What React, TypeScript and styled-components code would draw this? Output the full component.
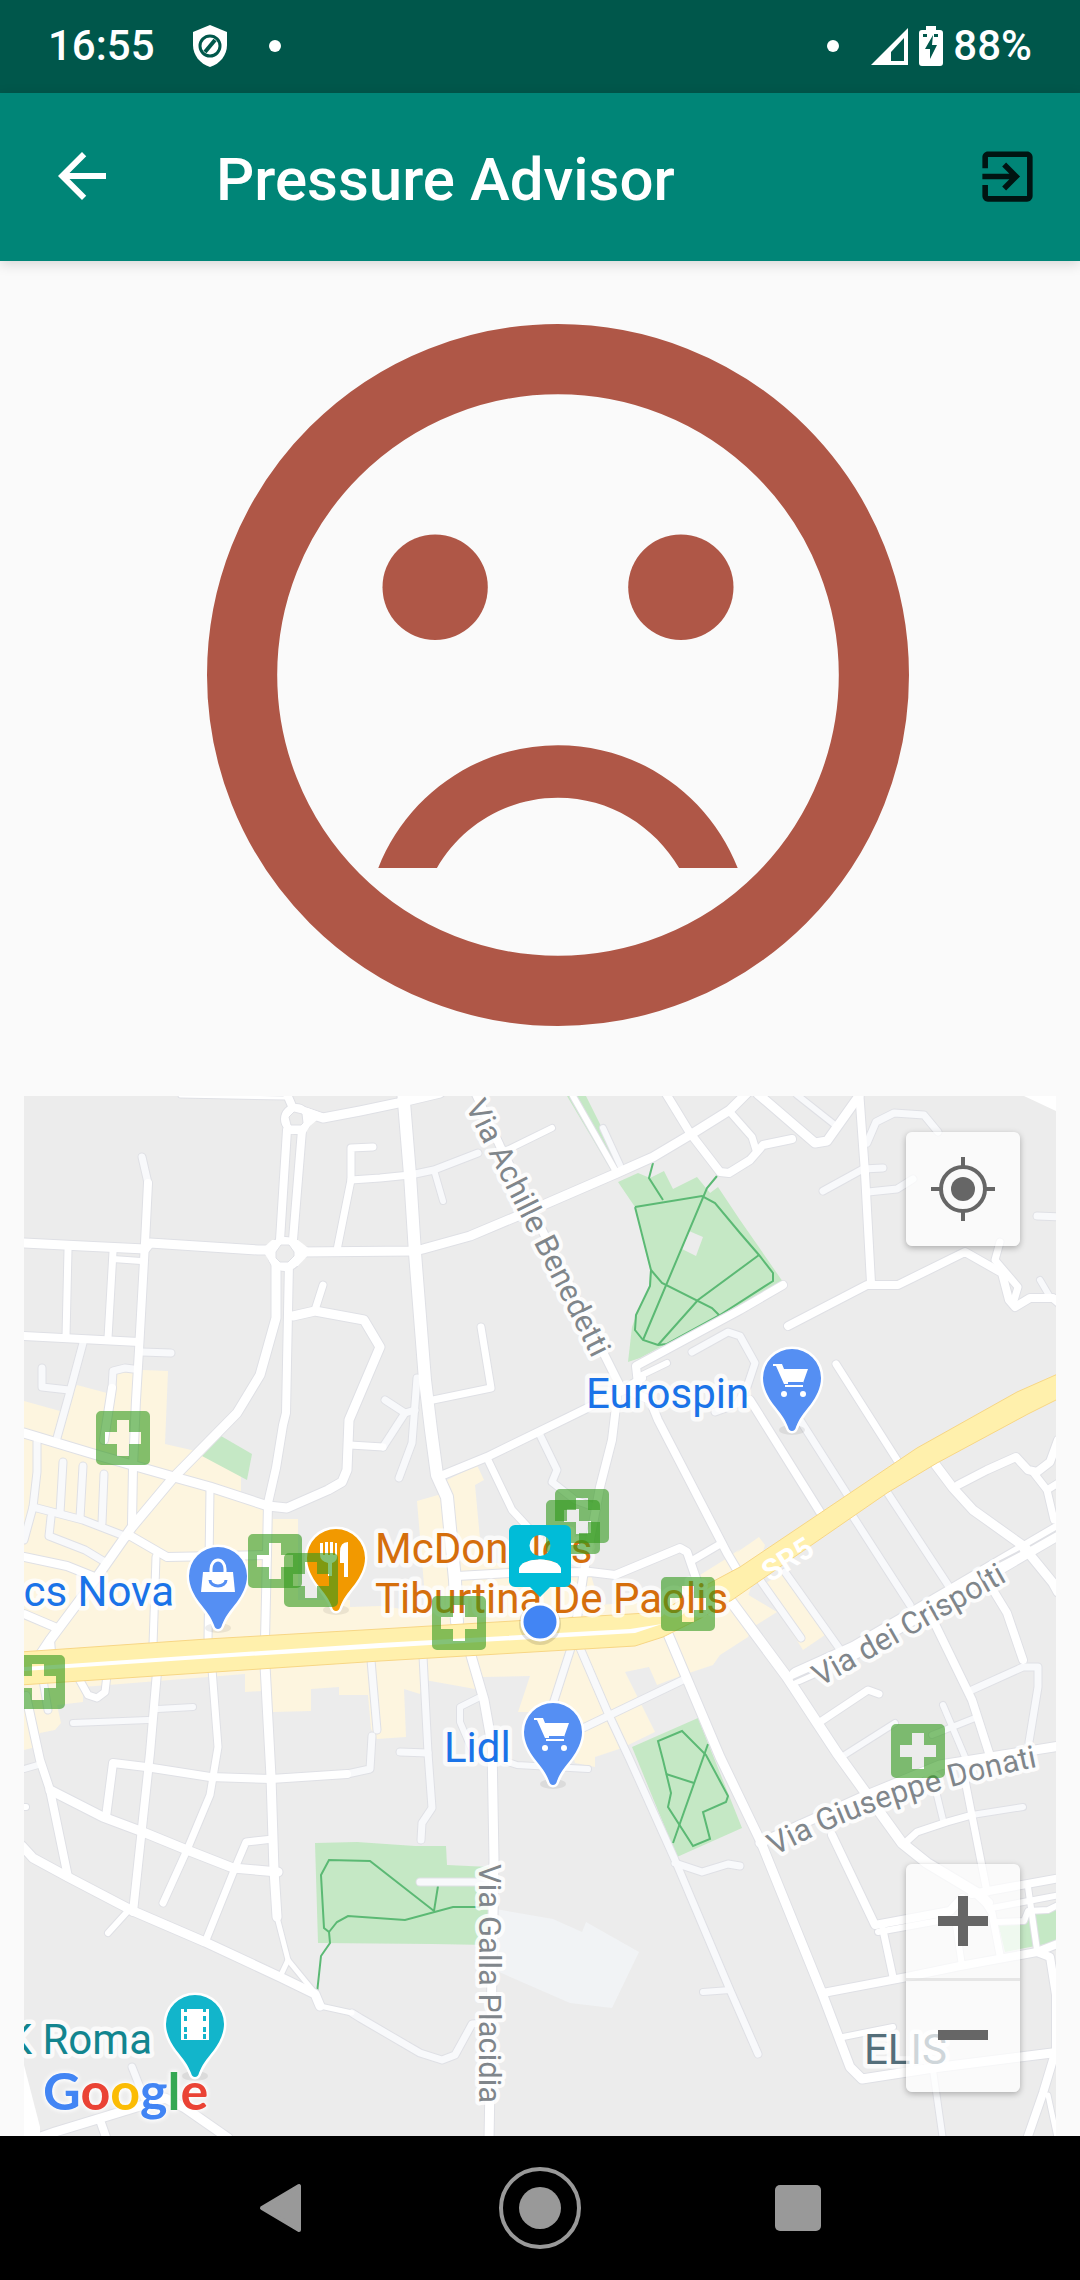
import React from 'react';
import styled, { createGlobalStyle } from 'styled-components';

const GlobalStyle = createGlobalStyle`
  * { box-sizing: border-box; }
  body { margin: 0; background: #fafafa; font-family: Roboto, "Noto Sans", sans-serif; }
`;

const Page = styled.div`
  display: flex;
  flex-direction: column;
  min-height: 100vh;
  background: #fafafa;
`;

const StatusBar = styled.div`
  display: flex;
  align-items: center;
  justify-content: space-between;
  height: 93px;
  padding: 0 48px 2px;
  background: #00574b;
  color: #fff;
  font-size: 42px;
  font-weight: 500;
  line-height: 48px;
`;

const StatusGroup = styled.div<{ $gap: number }>`
  display: flex;
  align-items: center;
  gap: ${(p) => p.$gap}px;
`;

const Dot = styled.span`
  width: 12px;
  height: 12px;
  margin: 0 4px;
  border-radius: 50%;
  background: #fff;
`;

const AppBar = styled.header`
  display: flex;
  align-items: center;
  height: 168px;
  padding: 0 37px 2px 46px;
  background: #008577;
  box-shadow: 0 3px 12px rgba(0, 0, 0, 0.15);
  z-index: 1;
`;

const Title = styled.h1`
  flex: 1;
  margin: 0 0 0 98px;
  padding-top: 8px;
  color: #fff;
  font-size: 60px;
  font-weight: 500;
  line-height: 72px;
`;

const IconButton = styled.button`
  display: flex;
  align-items: center;
  justify-content: center;
  width: 72px;
  height: 72px;
  padding: 0;
  border: 0;
  background: transparent;
  cursor: pointer;
`;

const Main = styled.main`
  display: flex;
  flex-direction: column;
  flex: 1;
`;

const Mood = styled.section`
  display: flex;
  justify-content: center;
  padding: 63px 0 70px 36px;

  svg {
    display: block;
    width: 702px;
    max-width: 100%;
  }
`;

const MapPanel = styled.section`
  position: relative;
  margin: 0 24px;
  overflow: hidden;
  background: #ececec;
`;

const MapDrawing = styled.svg`
  display: block;
  width: 100%;
  font-family: Roboto, "Noto Sans", sans-serif;
`;

const PlaceName = styled.text`
  font-size: 42px;
  stroke: rgba(255, 255, 255, 0.75);
  stroke-width: 9px;
  stroke-linejoin: round;
  paint-order: stroke;
`;

const StreetName = styled.text`
  font-size: 31px;
  fill: #80868b;
  stroke: rgba(255, 255, 255, 0.85);
  stroke-width: 8px;
  stroke-linejoin: round;
  paint-order: stroke;
`;

const RouteName = styled.text`
  font-size: 30px;
  font-weight: 700;
  fill: #fff;
`;

const Brand = styled.text`
  font-family: Lato, sans-serif;
  font-size: 52px;
  font-weight: 700;
  filter: drop-shadow(0 0 2px #fff) drop-shadow(0 0 2px #fff);
`;

const MapControls = styled.div<{ $edge: 'top' | 'bottom' }>`
  position: absolute;
  right: 36px;
  ${(p) => (p.$edge === 'top' ? 'top: 36px;' : 'bottom: 44px;')}
  display: flex;
  flex-direction: column;
  border-radius: 6px;
  background: rgba(255, 255, 255, 0.72);
  box-shadow: 0 2px 6px rgba(0, 0, 0, 0.28);
`;

const MapButton = styled.button`
  display: flex;
  align-items: center;
  justify-content: center;
  width: 114px;
  height: 114px;
  padding: 0;
  border: 0;
  background: transparent;
  cursor: pointer;

  & + & {
    box-shadow: inset 0 3px rgba(210, 210, 210, 0.5);
  }
`;

const NavBar = styled.nav`
  display: flex;
  align-items: center;
  justify-content: center;
  gap: 162px;
  height: 144px;
  background: #000;
`;

const NavButton = styled(IconButton)`
  width: 96px;
  height: 96px;
`;

type Road = [width: number, points: string];

const streets: Road[] = [
  [9, '24,1243 83,1246 145,1249 150,1243 258,1250 272,1250'],
  [9, '298,1252 415,1251 423,1249 470,1236 520,1215 617,1173 653,1157 690,1135 730,1110 748,1092'],
  [3, '180,1096 286,1098'],
  [8, '286,1092 292,1106'],
  [8, '287,1130 280,1240'],
  [8, '302,1130 293,1240'],
  [9, '305,1112 323,1118 360,1111 398,1103 440,1093'],
  [9, '276,1262 276,1318 260,1375 237,1413 173,1478 132,1527 97,1577 50,1640 40,1655'],
  [8, '289,1262 288,1313 286,1413 283,1425 276,1468 268,1503 267,1553 265,1640'],
  [9, '265,1665 271,1777 274,1870 277,1917'],
  [5, '277,1917 288,1960 315,1993'],
  [5, '288,1960 280,1977'],
  [7, '337,1250 351,1180 351,1148 373,1147'],
  [7, '351,1180 380,1178 410,1175'],
  [8, '148,1183 145,1243 139,1350 136,1400 133,1467 132,1524'],
  [8, '24,1336 139,1342'],
  [7, '68,1250 66,1337'],
  [7, '113,1252 108,1338'],
  [6, '113,1259 141,1261'],
  [8, '112,1388 104,1440'],
  [9, '24,1433 97,1455 167,1475 210,1487 268,1506 287,1508 328,1490 342,1482 347,1470 349,1420 380,1347 364,1320 315,1311 293,1316'],
  [7, '315,1310 323,1285'],
  [12, '403,1090 410,1175 415,1253 425,1380 431,1430 437,1475 447,1497 455,1580 457,1622'],
  [8, '475,1092 500,1146 622,1390'],
  [6, '503,1152 552,1128'],
  [7, '481,1327 491,1388 433,1400'],
  [7, '383,1447 350,1445'],
  [8, '443,1475 487,1457 567,1418 622,1391 642,1378'],
  [8, '783,1285 740,1310 636,1366 638,1384'],
  [6, '638,1377 667,1363'],
  [8, '622,1388 650,1400 658,1420 727,1553 743,1580'],
  [8, '617,1398 612,1440 600,1487 583,1577 576,1625'],
  [6, '573,1096 615,1170'],
  [8, '665,1092 690,1133 720,1172 729,1173 750,1160 763,1145 792,1139'],
  [7, '730,1112 752,1137 756,1150'],
  [9, '758,1094 815,1143 827,1141 859,1096'],
  [8, '859,1090 865,1173 871,1283'],
  [8, '788,1326 867,1285 898,1285 965,1252 1002,1273 1009,1300 1015,1307 1030,1298 1053,1298 1060,1304'],
  [7, '1000,1242 995,1260 1018,1287 1013,1304'],
  [7, '836,1364 897,1460'],
  [9, '935,1464 953,1488 973,1510 1022,1545 1053,1583 1058,1592'],
  [8, '750,1400 820,1512'],
  [10, '730,1600 787,1677 837,1753 902,1843 927,1863 977,1893 988,1903'],
  [17, '797,1676 855,1650 1060,1530'],
  [8, '933,1620 972,1700 990,1756'],
  [7, '963,1770 987,1892'],
  [8, '993,1590 1007,1613 1023,1660'],
  [7, '820,1722 868,1690 879,1694'],
  [9, '760,1843 862,1797 940,1765 1060,1746'],
  [8, '958,1485 987,1470 1016,1457 1028,1470 1037,1472 1050,1462 1058,1440'],
  [7, '1033,1472 1047,1490 1054,1520'],
  [7, '1047,1490 1060,1482'],
  [8, '24,1557 67,1566 97,1578'],
  [8, '24,1614 57,1628'],
  [8, '50,1640 51,1652'],
  [8, '129,1535 167,1557 267,1555'],
  [7, '156,1557 153,1645'],
  [7, '210,1489 208,1642'],
  [8, '157,1672 150,1753 133,1912'],
  [7, '212,1669 218,1747 210,1795 187,1850 163,1903'],
  [8, '347,1774 271,1779 210,1777 146,1767 113,1763 106,1817'],
  [7, '78,1677 88,1695 97,1698 105,1692 107,1675'],
  [8, '26,1696 40,1760 50,1790 68,1877'],
  [9, '50,1790 103,1817 143,1832 187,1850 233,1868 278,1872'],
  [9, '22,1846 33,1858 68,1877 133,1911 205,1942 280,1977 315,1994 320,2006'],
  [5, '320,2006 352,2013'],
  [6, '127,1912 108,1933'],
  [7, '273,1839 246,1842 235,1868 206,1940'],
  [6, '24,1807 26,1807'],
  [9, '38,2138 55,2132 150,2103 165,2098 185,2108 228,2138'],
  [8, '100,2120 107,2140'],
  [7, '487,1458 512,1510 537,1537'],
  [8, '457,1576 510,1573 590,1572 615,1575 680,1548 687,1552 698,1584'],
  [7, '693,1560 722,1543'],
  [9, '470,1652 484,1700 492,1745 494,1860 489,2140'],
  [9, '668,1634 720,1757 760,1840 822,1993 850,2067 862,2079 933,2068 1052,2053'],
  [8, '1037,1952 1050,1957 1056,1995 1056,2050 1043,2093 1026,2142'],
  [5, '1048,2095 1058,2142'],
  [8, '832,1835 875,1925 950,1911 962,1898'],
  [6, '878,1932 955,1918 962,1966'],
  [7, '883,1930 893,1977'],
  [8, '823,1993 907,1977 960,1966 1037,1952 1060,1943'],
  [6, '843,2037 893,2027'],
  [8, '972,1894 1060,1878'],
  [7, '906,1842 917,1832 947,1822 972,1815'],
  [7, '982,1897 992,1913 1000,1955'],
  [6, '992,1908 1060,1895'],
  [6, '1028,1887 1037,1950'],
  [6, '995,1922 1024,1921 1028,1911 1048,1910 1060,1904'],
];

const lanes: Road[] = [
  [7, '142,1157 148,1183'],
  [7, '171,1353 142,1352'],
  [7, '83,1343 69,1395 57,1438'],
  [7, '42,1368 42,1387 69,1390'],
  [7, '133,1369 125,1368 113,1371 112,1388'],
  [7, '415,1174 434,1170 478,1153'],
  [6, '434,1170 443,1201'],
  [7, '417,1378 412,1443 399,1478'],
  [7, '385,1400 405,1413 415,1410'],
  [7, '405,1413 383,1447'],
  [7, '692,1352 728,1332 740,1336 755,1363 747,1387 737,1404 715,1412'],
  [6, '603,1128 620,1165'],
  [6, '797,1095 835,1125'],
  [7, '867,1143 876,1122 894,1113 924,1115 938,1132'],
  [7, '823,1191 863,1169 883,1168'],
  [7, '868,1192 897,1189 913,1179'],
  [7, '1037,1216 1060,1217'],
  [6, '1040,1280 1050,1297'],
  [7, '800,1420 847,1494'],
  [7, '852,1515 910,1605'],
  [7, '887,1492 948,1585'],
  [7, '760,1580 801,1638'],
  [7, '785,1572 839,1648'],
  [7, '972,1690 1023,1667 1038,1667 1038,1687 1029,1742'],
  [6, '943,1705 965,1757'],
  [6, '932,1735 975,1718'],
  [6, '843,1756 895,1723'],
  [7, '37,1442 37,1472 33,1507 24,1540'],
  [7, '63,1462 60,1513'],
  [7, '83,1466 80,1518'],
  [7, '104,1474 102,1523'],
  [7, '33,1507 83,1520 127,1537'],
  [7, '51,1517 49,1536 85,1550 105,1562'],
  [7, '371,1660 377,1730'],
  [7, '372,1736 370,1769 347,1774'],
  [7, '43,1680 48,1710'],
  [6, '73,1723 148,1720'],
  [6, '158,1709 193,1707'],
  [6, '24,1769 38,1765'],
  [7, '352,2013 360,2018 420,2053 442,2060 455,2055 472,2024 484,2023'],
  [7, '132,2067 145,2100'],
  [7, '540,1435 557,1470 552,1482 575,1500 597,1508'],
  [7, '423,1656 428,1753 432,1808 422,1823 421,1840'],
  [7, '400,1752 428,1753'],
  [6, '478,1698 460,1707 460,1722 475,1757'],
  [6, '493,1757 517,1765 588,1769'],
  [7, '571,1648 553,1704'],
  [7, '580,1648 608,1713 630,1760 675,1860 730,1990 758,2054'],
  [7, '583,1728 683,1680'],
  [7, '675,1863 702,1872 728,1864 740,1866'],
  [6, '703,1992 730,1990'],
  [6, '972,1815 1023,1807'],
  [6, '935,1787 943,1820'],
  [6, '933,2070 943,2140'],
  [7, '420,1882 490,1882'],
];

const commercialAreas = [
  '24,1401 60,1411 77,1385 107,1393 110,1367 143,1370 168,1371 165,1444 200,1452 241,1464 241,1495 270,1503 273,1519 298,1519 298,1600 350,1600 350,1607 380,1606 425,1612 424,1585 417,1501 438,1495 447,1480 477,1465 484,1480 475,1485 482,1560 530,1570 590,1572 600,1605 660,1600 724,1560 740,1549 736,1553 759,1537 765,1545 740,1620 24,1665',
  '24,1680 640,1640 740,1590 777,1612 753,1627 748,1637 720,1655 713,1665 683,1675 657,1685 649,1667 625,1672 655,1732 622,1748 595,1757 595,1767 575,1763 560,1712 518,1712 530,1676 483,1677 475,1689 425,1680 420,1694 404,1689 406,1737 377,1739 371,1729 368,1695 339,1695 339,1687 311,1689 311,1711 273,1712 262,1691 245,1692 245,1674 83,1687 83,1702 57,1705 61,1723 55,1730 40,1733 36,1747 24,1750',
  '762,1585 785,1572 825,1635 803,1650',
];

const parks = [
  '567,1096 586,1096 622,1168 611,1170',
  '618,1182 638,1173 650,1178 664,1171 673,1189 697,1177 710,1193 718,1187 740,1220 783,1282 640,1358 628,1362 632,1327 637,1313 649,1287 650,1270 635,1207',
  '221,1436 252,1454 247,1480 202,1456',
  '632,1747 698,1718 742,1828 677,1857',
  '315,1843 357,1842 415,1846 446,1846 447,1865 490,1867 490,1945 432,1944 318,1943',
  '998,1923 1025,1923 1028,1913 1056,1910 1056,1942 1005,1952',
];

const footpaths = [
  '653,1163 649,1178 663,1200',
  '635,1207 702,1196 715,1203 740,1233 759,1255 773,1273 773,1281 720,1315 667,1344 658,1345 643,1340 635,1330 636,1315 650,1286 651,1270 635,1207',
  '717,1176 707,1188 643,1340',
  '651,1270 662,1283 712,1308 719,1315',
  '658,1345 698,1300 759,1255',
  '663,1760 658,1741 682,1731 706,1755 728,1796 726,1802 703,1812 710,1839 693,1846 668,1807 671,1793 663,1760',
  '708,1744 673,1843',
  '666,1774 694,1783',
  '317,1993 321,1956 330,1943 329,1932 324,1928 321,1875 329,1860 370,1861 434,1911 438,1886',
  '329,1932 337,1922 348,1916 405,1920 453,1907 480,1907',
];

const pharmacies = [
  [96, 1411], [248, 1534], [284, 1553], [11, 1655], [432, 1596],
  [555, 1489], [546, 1500], [661, 1577], [891, 1724],
];

const places = [
  { name: 'Eurospin', x: 586, y: 1408, color: '#1a73e8' },
  { name: "McDonald's", x: 375, y: 1563, color: '#d56e0c' },
  { name: 'Tiburtina De Paolis', x: 375, y: 1613, color: '#d56e0c' },
  { name: 'Lidl', x: 444, y: 1762, color: '#1a73e8' },
  { name: 'cs Nova', x: 174, y: 1606, color: '#1a73e8', anchor: 'end' as const },
  { name: 'K Roma', x: 152, y: 2054, color: '#12858f', anchor: 'end' as const },
  { name: 'ELIS', x: 864, y: 2064, color: '#546e7a' },
];

const Roads = ({ roads, color, casing }: { roads: Road[]; color: string; casing?: boolean }) => (
  <g fill="none" stroke={color} strokeLinecap="round" strokeLinejoin="round">
    {roads.map(([w, pts]) => (
      <polyline key={pts} points={pts} strokeWidth={casing ? w + 2 : w} />
    ))}
  </g>
);

const CartGlyph = () => (
  <g>
    <path d="M-19-14h9l2 5h24l-5 14v1h-19l-8-18h-3z" fill="#fff" />
    <path d="M-4 4h15v2h-15z" fill="#558ff3" />
    <path d="M-7 7h18v2h-18z" fill="#fff" />
    <circle cx="-8" cy="16" r="3" fill="#fff" />
    <circle cx="11" cy="16" r="3" fill="#fff" />
  </g>
);

const BagGlyph = () => (
  <g>
    <path d="M-15-4h30l2 20h-34z" fill="#fff" />
    <path d="M-7-3v-4a7 9 0 0 1 14 0v4" fill="none" stroke="#fff" strokeWidth="3" />
    <path d="M-8 4a8 6 0 0 0 16 0" fill="none" stroke="#558ff3" strokeWidth="3" />
  </g>
);

const CutleryGlyph = () => (
  <g fill="#fff">
    <path d="M-16-15h3v12h2v-13h3v13h2v-13h3v13h2v-12h2v14q0 4-5 6v13h-4v-13q-8-2-8-8z" />
    <path d="M12-16v35h-4v-14h-4v-11q0-10 8-10z" />
  </g>
);

const FilmGlyph = () => (
  <g>
    <path d="M-14-15h28v31h-28z" fill="#fff" />
    <g fill="#12b5cb">
      {[-15, -8, 3, 10].map((y) => (
        <React.Fragment key={y}>
          <rect x="-11" y={y} width="3" height={y === -15 ? 3 : 5} />
          <rect x="8" y={y} width="3" height={y === -15 ? 3 : 5} />
        </React.Fragment>
      ))}
    </g>
  </g>
);

const Pin = ({ x, y, color, children }: { x: number; y: number; color: string; children: React.ReactNode }) => (
  <g transform={`translate(${x} ${y})`}>
    <ellipse cx="0" cy="52" rx="13" ry="5" fill="#000" opacity="0.07" />
    <path
      d="M0-29a29 29 0 0 1 29 29c0 10-5 19-10 26-8 10-12 15-15 23q-1 4-4 4t-4-4c-3-8-7-13-15-23c-5-7-10-16-10-26a29 29 0 0 1 29-29z"
      fill={color}
      stroke="#fff"
      strokeWidth="5"
      paintOrder="stroke"
    />
    {children}
  </g>
);

const CityMap = () => (
  <MapDrawing viewBox="24 1096 1032 1040" role="img" aria-label="Map of nearby pharmacies">
    <rect x="24" y="1096" width="1032" height="1040" fill="#ececec" />
    <g fill="#fdf5df">{commercialAreas.map((p) => <polygon key={p} points={p} />)}</g>
    <polygon points="490,1908 553,1919 582,1932 586,1922 639,1952 612,2008 570,2003 490,1968" fill="#f1f3f5" />
    <g fill="#c5e8c5">{parks.map((p) => <polygon key={p} points={p} />)}</g>
    <polygon points="689,1231 703,1237 696,1256 682,1249" fill="#ececec" />
    <g fill="none" stroke="#5bb974" strokeWidth="2">
      {footpaths.map((p) => <polyline key={p} points={p} />)}
    </g>

    <Roads roads={lanes} color="#dfe0e5" casing />
    <Roads roads={streets} color="#dfe0e5" casing />
    <circle cx="285" cy="1254" r="13" fill="none" stroke="#dfe0e5" strokeWidth="10" />
    <circle cx="296" cy="1119" r="11" fill="none" stroke="#dfe0e5" strokeWidth="10" />
    <Roads roads={lanes} color="#f8f9fb" />
    <Roads roads={streets} color="#fff" />
    <circle cx="285" cy="1254" r="13" fill="none" stroke="#fff" strokeWidth="8" />
    <circle cx="296" cy="1119" r="11" fill="none" stroke="#fff" strokeWidth="8" />
    <polygon points="262,1249 272,1240 298,1240 312,1251 298,1266 272,1266" fill="#fff" />
    <polygon points="284,1115 292,1104 308,1108 324,1114 310,1126 305,1134 284,1134" fill="#fff" />
    <polygon points="276,1252 281,1245 289,1245 294,1252 294,1256 288,1262 280,1262 276,1258" fill="#ececec" stroke="#dfe0e5" />
    <polygon points="289,1117 294,1112 302,1114 303,1123 301,1125 291,1125" fill="#ececec" stroke="#dfe0e5" />
    <polygon points="24,2065 40,2127 40,2136 24,2136" fill="#fff" />
    <polygon points="1024,1096 1056,1096 1056,1111" fill="#fff" />
    <path d="M793 1680l18-8M997 1563l23-12M1030 1546l28-16" stroke="#dfe0e5" strokeWidth="2" />

    <polygon
      points="20,1652 207,1639 380,1629 647,1613 662,1611 710,1583 740,1567 917,1448 967,1420 1017,1392 1060,1373 1060,1398 1028,1414 937,1463 887,1493 732,1600 703,1617 663,1637 635,1646 380,1661 20,1685"
      fill="#fff0ac"
      stroke="#f7d685"
      strokeWidth="1"
    />
    <polygon points="24,1667 200,1655 380,1643 630,1629 662,1624 635,1633 380,1648 200,1659 24,1671" fill="#fff" />

    <defs>
      <path id="achille" d="M465 1106L600 1374" />
      <path id="galla" d="M479 1864V2120" />
      <path id="crispolti" d="M820 1687L1023 1572" />
      <path id="donati" d="M775 1856Q880 1797 1056 1763" />
      <path id="route" d="M770 1583L830 1545" />
    </defs>
    <RouteName><textPath href="#route">SR5</textPath></RouteName>
    <StreetName><textPath href="#achille">Via Achille Benedetti</textPath></StreetName>
    <StreetName><textPath href="#galla">Via Galla Placidia</textPath></StreetName>
    <StreetName><textPath href="#crispolti">Via dei Crispolti</textPath></StreetName>
    <StreetName><textPath href="#donati">Via Giuseppe Donati</textPath></StreetName>
    {places.map((p) => (
      <PlaceName key={p.name} x={p.x} y={p.y} fill={p.color} textAnchor={p.anchor}>{p.name}</PlaceName>
    ))}

    <Pin x={792} y={1378} color="#558ff3"><CartGlyph /></Pin>
    <Pin x={553} y={1732} color="#558ff3"><CartGlyph /></Pin>
    <Pin x={218} y={1576} color="#558ff3"><BagGlyph /></Pin>
    <Pin x={336} y={1558} color="#f29900"><CutleryGlyph /></Pin>
    <Pin x={195} y={2024} color="#12b5cb"><FilmGlyph /></Pin>

    {pharmacies.map(([x, y]) => (
      <path
        key={`${x}-${y}`}
        transform={`translate(${x} ${y})`}
        d="M5 0h44a5 5 0 0 1 5 5v44a5 5 0 0 1-5 5h-44a5 5 0 0 1-5-5v-44a5 5 0 0 1 5-5zM21 9v12h-12v12h12v12h12v-12h12v-12h-12v-12z"
        fill="rgba(50,153,28,0.6)"
        fillRule="evenodd"
      />
    ))}

    <circle cx="540" cy="1624" r="21" fill="#000" opacity="0.12" />
    <circle cx="540" cy="1622" r="18" fill="#4285f4" stroke="#fff" strokeWidth="3" />
    <path
      d="M515 1525h50a6 6 0 0 1 6 6v50a6 6 0 0 1-6 6h-15l-10 10-10-10h-15a6 6 0 0 1-6-6v-50a6 6 0 0 1 6-6zM540 1535a10 10 0 0 0 0 21a10 10 0 0 0 0-21zM519 1573h42v-3c0-14-42-14-42 0z"
      fill="#00bcd8"
      fillRule="evenodd"
    />
    <path d="M519 1573h42v-3c0-14-42-14-42 0z" fill="#fff" />

    <Brand x="43" y="2110">
      <tspan fill="#4285f4">G</tspan>
      <tspan fill="#ea4335">o</tspan>
      <tspan fill="#fbbc05">o</tspan>
      <tspan fill="#4285f4">g</tspan>
      <tspan fill="#34a853">l</tspan>
      <tspan fill="#ea4335">e</tspan>
    </Brand>
  </MapDrawing>
);

export default function App() {
  return (
    <Page>
      <GlobalStyle />
      <StatusBar>
        <StatusGroup $gap={36}>
          <span>16:55</span>
          <svg width="38" height="44" viewBox="0 0 38 44" aria-hidden="true">
            <path d="M19 1L36 8v13c0 10-7 19-17 22C9 40 2 31 2 21V8z" fill="#fff" />
            <circle cx="19" cy="22" r="10" fill="none" stroke="#00574b" strokeWidth="3" />
            <path d="M14 28l10-12" stroke="#00574b" strokeWidth="4" />
          </svg>
          <Dot />
        </StatusGroup>
        <StatusGroup $gap={10}>
          <Dot />
          <svg width="56" height="40" viewBox="0 0 56 40" aria-hidden="true">
            <path d="M55 2V39H18z" fill="#fff" />
            <path d="M51 12V35H38V26z" fill="#00574b" />
          </svg>
          <svg width="24" height="40" viewBox="0 0 24 40" aria-hidden="true">
            <path d="M7 0h10v4h4a3 3 0 0 1 3 3v30a3 3 0 0 1-3 3H3a3 3 0 0 1-3-3V7a3 3 0 0 1 3-3h4z" fill="#fff" />
            <path d="M4 8h4v3H4zM15 8h4v3h-4zM14 9L6 23h5v10l7-14h-5z" fill="#00574b" />
          </svg>
          <span>88%</span>
        </StatusGroup>
      </StatusBar>

      <AppBar>
        <IconButton type="button" aria-label="Back">
          <svg width="72" height="72" viewBox="0 0 24 24" aria-hidden="true">
            <path d="M20 11H7.83l5.59-5.59L12 4l-8 8 8 8 1.41-1.41L7.83 13H20v-2z" fill="#fff" />
          </svg>
        </IconButton>
        <Title>Pressure Advisor</Title>
        <IconButton type="button" aria-label="Exit">
          <svg width="67" height="67" viewBox="0 0 24 24" aria-hidden="true">
            <path
              d="M10.09 15.59L11.5 17l5-5-5-5-1.41 1.41L12.67 11H3v2h9.67l-2.58 2.59zM19 3H5c-1.11 0-2 .9-2 2v4h2V5h14v14H5v-4H3v4c0 1.1.89 2 2 2h14c1.1 0 2-.9 2-2V5c0-1.1-.9-2-2-2z"
              fill="rgba(0,0,0,0.85)"
            />
          </svg>
        </IconButton>
      </AppBar>

      <Main>
        <Mood>
          <svg viewBox="2 2 20 20" role="img" aria-label="Dissatisfied" fill="#af5747">
            <circle cx="12" cy="12" r="9" fill="none" stroke="#af5747" strokeWidth="2" />
            <circle cx="8.5" cy="9.5" r="1.5" />
            <circle cx="15.5" cy="9.5" r="1.5" />
            <path d="M12 14c-2.33 0-4.32 1.45-5.12 3.5h1.67c.69-1.19 1.97-2 3.45-2s2.75.81 3.45 2h1.67c-.8-2.05-2.79-3.5-5.12-3.5z" />
          </svg>
        </Mood>

        <MapPanel>
          <CityMap />
          <MapControls $edge="top">
            <MapButton type="button" aria-label="My location">
              <svg width="64" height="64" viewBox="0 0 64 64" aria-hidden="true">
                <circle cx="32" cy="32" r="12" fill="#666" />
                <circle cx="32" cy="32" r="22" fill="none" stroke="#666" strokeWidth="4" />
                <path d="M32 0v9M32 55v9M0 32h9M55 32h9" stroke="#666" strokeWidth="4" />
              </svg>
            </MapButton>
          </MapControls>
          <MapControls $edge="bottom">
            <MapButton type="button" aria-label="Zoom in">
              <svg width="50" height="50" viewBox="0 0 50 50" aria-hidden="true">
                <path d="M20 0h10v20h20v10H30v20H20V30H0V20h20z" fill="#666" />
              </svg>
            </MapButton>
            <MapButton type="button" aria-label="Zoom out">
              <svg width="50" height="10" viewBox="0 0 50 10" aria-hidden="true">
                <path d="M0 0h50v10H0z" fill="#666" />
              </svg>
            </MapButton>
          </MapControls>
        </MapPanel>
      </Main>

      <NavBar>
        <NavButton type="button" aria-label="Back">
          <svg width="46" height="50" viewBox="0 0 46 50" aria-hidden="true">
            <path d="M3 25L40 3v44z" fill="#999" stroke="#999" strokeWidth="4" strokeLinejoin="round" />
          </svg>
        </NavButton>
        <NavButton type="button" aria-label="Home">
          <svg width="84" height="84" viewBox="0 0 84 84" aria-hidden="true">
            <circle cx="42" cy="42" r="39" fill="none" stroke="#999" strokeWidth="4" />
            <circle cx="42" cy="42" r="21" fill="#999" />
          </svg>
        </NavButton>
        <NavButton type="button" aria-label="Recent apps">
          <svg width="46" height="46" viewBox="0 0 46 46" aria-hidden="true">
            <rect width="46" height="46" rx="5" fill="#999" />
          </svg>
        </NavButton>
      </NavBar>
    </Page>
  );
}
